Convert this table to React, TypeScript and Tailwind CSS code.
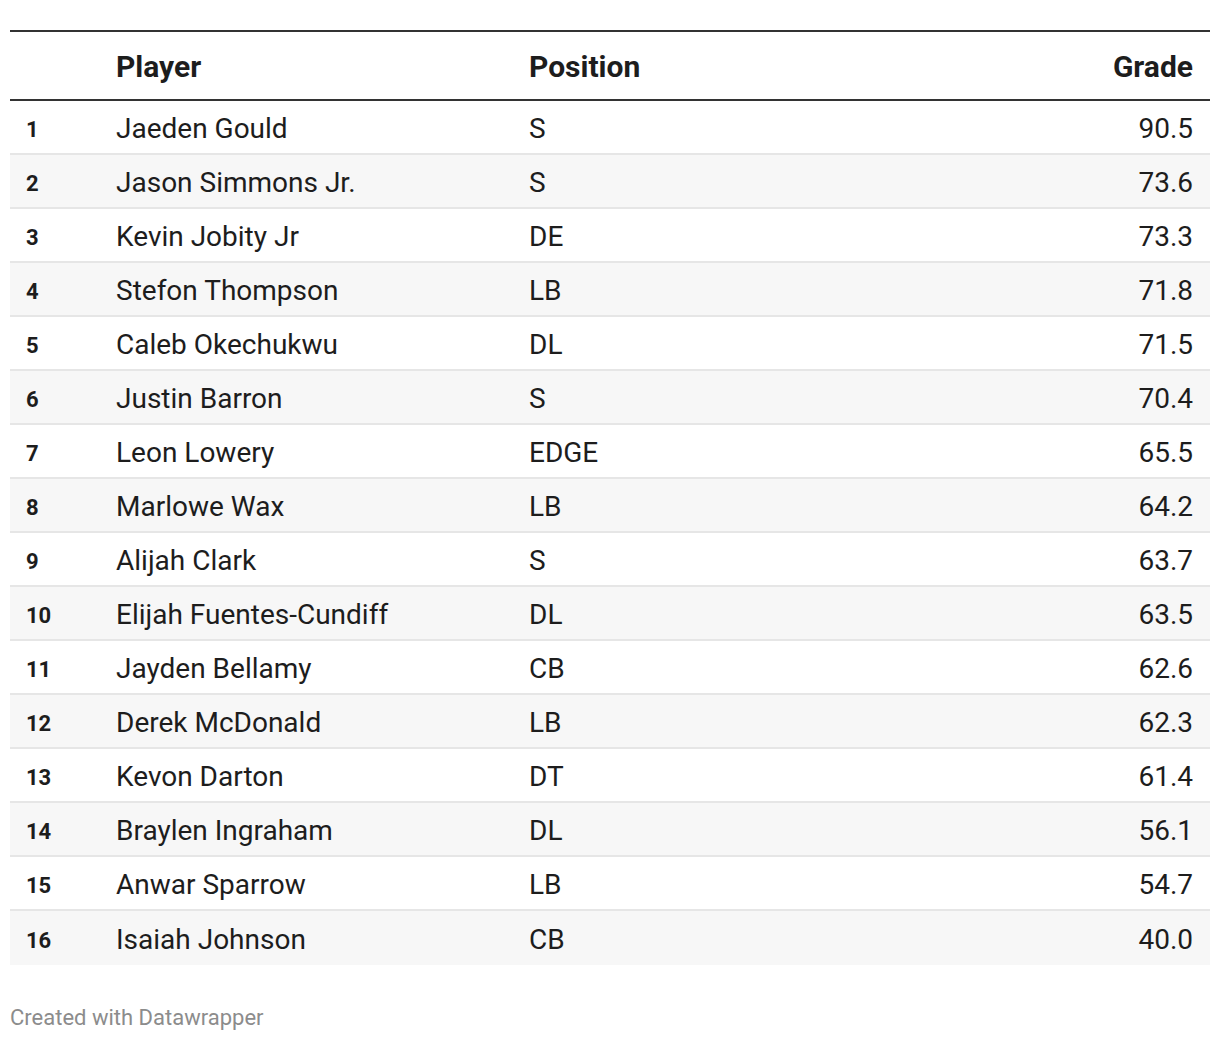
const rows = [
  ['Jaeden Gould', 'S', '90.5'],
  ['Jason Simmons Jr.', 'S', '73.6'],
  ['Kevin Jobity Jr', 'DE', '73.3'],
  ['Stefon Thompson', 'LB', '71.8'],
  ['Caleb Okechukwu', 'DL', '71.5'],
  ['Justin Barron', 'S', '70.4'],
  ['Leon Lowery', 'EDGE', '65.5'],
  ['Marlowe Wax', 'LB', '64.2'],
  ['Alijah Clark', 'S', '63.7'],
  ['Elijah Fuentes-Cundiff', 'DL', '63.5'],
  ['Jayden Bellamy', 'CB', '62.6'],
  ['Derek McDonald', 'LB', '62.3'],
  ['Kevon Darton', 'DT', '61.4'],
  ['Braylen Ingraham', 'DL', '56.1'],
  ['Anwar Sparrow', 'LB', '54.7'],
  ['Isaiah Johnson', 'CB', '40.0'],
]

export default function App() {
  return (
    <div className="min-h-screen bg-white px-[10px] pt-[30px] font-['Roboto',sans-serif] text-[#1d1d1d]">
      {/* table */}
      <div className="border-t-2 border-[#333]">
        <div className="grid h-[69px] grid-cols-[106px_413px_1fr_auto] items-center border-b-2 border-[#333] pt-[2px] text-[30px] font-bold">
          <div />
          <div>Player</div>
          <div>Position</div>
          <div className="pr-[17px] text-right">Grade</div>
        </div>
        {rows.map((r, i) => (
          <div
            key={`row-${i}`}
            className={
              'grid h-[54px] grid-cols-[106px_413px_1fr_auto] items-center pt-[4px] text-[28px] ' +
              (i % 2 === 1 ? 'bg-[#f7f7f7] ' : 'bg-white ') +
              (i < rows.length - 1 ? 'border-b-2 border-[#e6e6e6]' : '')
            }
          >
            <div className="pl-4 text-[22px] font-bold">{i + 1}</div>
            <div>{r[0]}</div>
            <div>{r[1]}</div>
            <div className="pr-[17px] text-right">{r[2]}</div>
          </div>
        ))}
      </div>
      <p className="mt-[36px] text-[22px] text-[#8c8c8c]">Created with Datawrapper</p>
    </div>
  )
}
